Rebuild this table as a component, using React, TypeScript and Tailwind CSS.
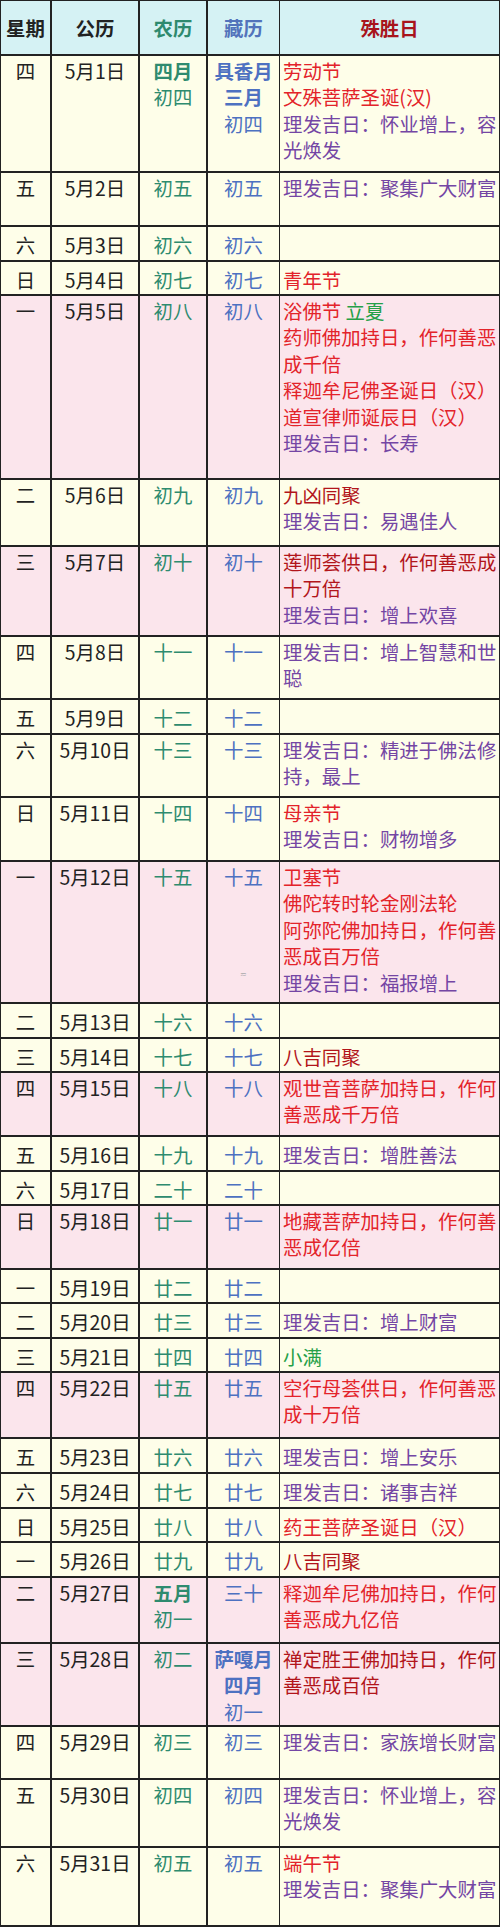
type Row = {
  w: string;
  d: string;
  nl: string[];
  zl: string[];
  h: string;
  pink?: boolean;
  short?: boolean;
  ev?: string[];
};

// line prefix: r red, d dark red, p purple, g green; "|" splits colour runs; "*" marks a bold month
const rows: Row[] = [
  { w: "四", d: "5月1日", nl: ["*四月", "初四"], zl: ["*具香月", "*三月", "初四"], h: "h-[117px]", ev: ["r劳动节", "r文殊菩萨圣诞(汉)", "p理发吉日：怀业增上，容", "p光焕发"] },
  { w: "五", d: "5月2日", nl: ["初五"], zl: ["初五"], h: "h-[54px]", ev: ["p理发吉日：聚集广大财富"] },
  { w: "六", d: "5月3日", nl: ["初六"], zl: ["初六"], h: "h-[35px]", short: true },
  { w: "日", d: "5月4日", nl: ["初七"], zl: ["初七"], h: "h-[34px]", short: true, ev: ["r青年节"] },
  { w: "一", d: "5月5日", nl: ["初八"], zl: ["初八"], h: "h-[184px]", pink: true, ev: ["r浴佛节 |g立夏", "r药师佛加持日，作何善恶", "r成千倍", "r释迦牟尼佛圣诞日（汉）", "r道宣律师诞辰日（汉）", "p理发吉日：长寿"] },
  { w: "二", d: "5月6日", nl: ["初九"], zl: ["初九"], h: "h-[67px]", ev: ["d九凶同聚", "p理发吉日：易遇佳人"] },
  { w: "三", d: "5月7日", nl: ["初十"], zl: ["初十"], h: "h-[90px]", pink: true, ev: ["d莲师荟供日，作何善恶成", "d十万倍", "p理发吉日：增上欢喜"] },
  { w: "四", d: "5月8日", nl: ["十一"], zl: ["十一"], h: "h-[63px]", ev: ["p理发吉日：增上智慧和世", "p聪"] },
  { w: "五", d: "5月9日", nl: ["十二"], zl: ["十二"], h: "h-[35px]", short: true },
  { w: "六", d: "5月10日", nl: ["十三"], zl: ["十三"], h: "h-[63px]", ev: ["p理发吉日：精进于佛法修", "p持，最上"] },
  { w: "日", d: "5月11日", nl: ["十四"], zl: ["十四"], h: "h-[64px]", ev: ["r母亲节", "p理发吉日：财物增多"] },
  { w: "一", d: "5月12日", nl: ["十五"], zl: ["十五"], h: "h-[142px]", pink: true, ev: ["r卫塞节", "r佛陀转时轮金刚法轮", "r阿弥陀佛加持日，作何善", "r恶成百万倍", "p理发吉日：福报增上"] },
  { w: "二", d: "5月13日", nl: ["十六"], zl: ["十六"], h: "h-[35px]", short: true },
  { w: "三", d: "5月14日", nl: ["十七"], zl: ["十七"], h: "h-[34px]", short: true, ev: ["d八吉同聚"] },
  { w: "四", d: "5月15日", nl: ["十八"], zl: ["十八"], h: "h-[64px]", pink: true, ev: ["r观世音菩萨加持日，作何", "r善恶成千万倍"] },
  { w: "五", d: "5月16日", nl: ["十九"], zl: ["十九"], h: "h-[35px]", short: true, ev: ["p理发吉日：增胜善法"] },
  { w: "六", d: "5月17日", nl: ["二十"], zl: ["二十"], h: "h-[34px]", short: true },
  { w: "日", d: "5月18日", nl: ["廿一"], zl: ["廿一"], h: "h-[64px]", pink: true, ev: ["r地藏菩萨加持日，作何善", "r恶成亿倍"] },
  { w: "一", d: "5月19日", nl: ["廿二"], zl: ["廿二"], h: "h-[34px]", short: true },
  { w: "二", d: "5月20日", nl: ["廿三"], zl: ["廿三"], h: "h-[35px]", short: true, ev: ["p理发吉日：增上财富"] },
  { w: "三", d: "5月21日", nl: ["廿四"], zl: ["廿四"], h: "h-[34px]", short: true, ev: ["g小满"] },
  { w: "四", d: "5月22日", nl: ["廿五"], zl: ["廿五"], h: "h-[66px]", pink: true, ev: ["r空行母荟供日，作何善恶", "r成十万倍"] },
  { w: "五", d: "5月23日", nl: ["廿六"], zl: ["廿六"], h: "h-[35px]", short: true, ev: ["p理发吉日：增上安乐"] },
  { w: "六", d: "5月24日", nl: ["廿七"], zl: ["廿七"], h: "h-[35px]", short: true, ev: ["p理发吉日：诸事吉祥"] },
  { w: "日", d: "5月25日", nl: ["廿八"], zl: ["廿八"], h: "h-[34px]", short: true, ev: ["r药王菩萨圣诞日（汉）"] },
  { w: "一", d: "5月26日", nl: ["廿九"], zl: ["廿九"], h: "h-[35px]", short: true, ev: ["d八吉同聚"] },
  { w: "二", d: "5月27日", nl: ["*五月", "初一"], zl: ["三十"], h: "h-[66px]", pink: true, ev: ["r释迦牟尼佛加持日，作何", "r善恶成九亿倍"] },
  { w: "三", d: "5月28日", nl: ["初二"], zl: ["*萨嘎月", "*四月", "初一"], h: "h-[83px]", pink: true, ev: ["d禅定胜王佛加持日，作何", "d善恶成百倍"] },
  { w: "四", d: "5月29日", nl: ["初三"], zl: ["初三"], h: "h-[53px]", ev: ["p理发吉日：家族增长财富"] },
  { w: "五", d: "5月30日", nl: ["初四"], zl: ["初四"], h: "h-[68px]", ev: ["p理发吉日：怀业增上，容", "p光焕发"] },
  { w: "六", d: "5月31日", nl: ["初五"], zl: ["初五"], h: "h-[79px]", ev: ["r端午节", "p理发吉日：聚集广大财富"] },
];

const tone: Record<string, string> = {
  r: "text-[#e3232a]",
  d: "text-[#b2151b]",
  p: "text-[#7446a4]",
  g: "text-[#25a047]",
};

const grid = "grid grid-cols-[51px_88px_68px_72px_220px]";
const line = "border-r-2 border-[#222]";

function Stack({ items, color }: { items: string[]; color: string }) {
  return (
    <>
      {items.map((s, i) =>
        s.startsWith("*") ? (
          <div key={i} className={`font-bold ${color}`}>{s.slice(1)}</div>
        ) : (
          <div key={i} className={color}>{s}</div>
        )
      )}
    </>
  );
}

function Events({ ev }: { ev: string[] }) {
  return (
    <>
      {ev.map((l, i) => (
        <div key={i} className="whitespace-pre">
          {l.split("|").map((run, j) => (
            <span key={j} className={tone[run[0]]}>{run.slice(1)}</span>
          ))}
        </div>
      ))}
    </>
  );
}

export default function App() {
  return (
    <div
      className="w-[500px] bg-white text-[19.4px] leading-[26.4px] text-[#222]"
      style={{ fontFamily: '"Microsoft YaHei", "Noto Sans CJK SC", "Noto Sans", sans-serif' }}
    >
      <div className="border-l border-t border-[#222]">
        {/* header */}
        <div className={`${grid} h-[55px] border-b-2 border-[#222] bg-[#d5f2f4] text-center font-bold`}>
          <div className={`${line} pt-[14px]`}>星期</div>
          <div className={`${line} pt-[14px]`}>公历</div>
          <div className={`${line} pt-[14px] text-[#2e8a6e]`}>农历</div>
          <div className="border-r border-[#222] pt-[14px] text-[#5273bb]">藏历</div>
          <div className="border-r border-[#222] pt-[14px] text-[#a8141c]">殊胜日</div>
        </div>

        {rows.map((r) => {
          const pt = r.short ? "pt-[5px]" : "pt-[2px]";
          return (
            <div
              key={r.d}
              className={`${grid} ${r.h} border-b-2 border-[#222] ${r.pink ? "bg-[#fbe5ec]" : "bg-[#fefee9]"}`}
            >
              <div className={`${line} ${pt} text-center`}>{r.w}</div>
              <div className={`${line} ${pt} text-center`}>{r.d}</div>
              <div className={`${line} ${pt} text-center`}>
                <Stack items={r.nl} color="text-[#2e8b6f]" />
              </div>
              <div className={`border-r border-[#222] ${pt} text-center`}>
                <Stack items={r.zl} color="text-[#4d71c1]" />
                {r.d === "5月12日" && (
                  <div className="mt-[80px] text-[8px] leading-none text-[#aaa]">≂</div>
                )}
              </div>
              <div className={`border-r border-[#222] ${pt} pl-[3px]`}>
                {r.ev && <Events ev={r.ev} />}
              </div>
            </div>
          );
        })}
      </div>
    </div>
  );
}
